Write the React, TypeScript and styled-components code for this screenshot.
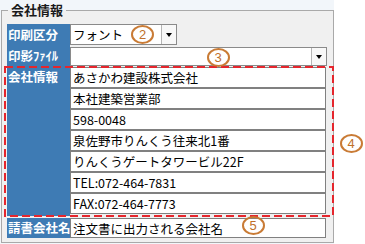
import React from "react";
import styled, { createGlobalStyle } from "styled-components";

const Global = createGlobalStyle`
  html, body { margin: 0; padding: 0; background: #ffffff; }
  body { font-family: "Noto Sans CJK JP", "Noto Sans", sans-serif; }
`;

const Page = styled.div`
  position: relative;
  width: 365px;
  height: 244px;
  overflow: hidden;
`;

const Panel = styled.div`
  width: 334px;
  height: 244px;
  box-sizing: border-box;
  padding: 2px 0 0 1px;
  background: #f2f6fa;
`;

const Fieldset = styled.fieldset`
  margin: 0;
  width: 333px;
  box-sizing: border-box;
  border: 1px solid #a9a9a9;
  background: #f0f0f0;
  padding: 6px 6px 4px 5px;
  min-width: 0;
`;

const Legend = styled.legend`
  padding: 0 3px;
  margin-left: 1px;
  font-size: 13px;
  line-height: 16px;
  font-weight: 700;
  color: #1a1a1a;
`;

const Form = styled.div`
  display: grid;
  grid-template-columns: 63px 1fr;
  grid-template-rows: 22px 20px 150px 22px;
`;

const Label = styled.div<{ $row: number; $top?: boolean; $gap?: boolean }>`
  grid-column: 1;
  grid-row: ${(p) => p.$row};
  background: #3e7bb4;
  color: #ffffff;
  font-weight: 700;
  font-size: 12.5px;
  line-height: 16px;
  padding: ${(p) => (p.$top ? "3px" : "0")} 0 0 1px;
  display: flex;
  align-items: ${(p) => (p.$top ? "flex-start" : "center")};
  white-space: nowrap;
  margin-top: ${(p) => (p.$gap ? "2px" : "0")};
`;

const Cell = styled.div<{ $row: number; $gap?: boolean }>`
  grid-column: 2;
  grid-row: ${(p) => p.$row};
  display: flex;
  flex-direction: column;
  margin-top: ${(p) => (p.$gap ? "2px" : "0")};
`;

const SelectBox = styled.div<{ $w?: number; $h: number; $mt?: number }>`
  display: flex;
  align-items: stretch;
  width: ${(p) => (p.$w ? `${p.$w}px` : "100%")};
  height: ${(p) => p.$h}px;
  margin-top: ${(p) => p.$mt ?? 0}px;
  box-sizing: border-box;
  border: 1px solid #8a8a8a;
  background: #ffffff;
`;

const SelectText = styled.span`
  flex: 1;
  padding-left: 2px;
  font-size: 12.5px;
  line-height: 18px;
  color: #000;
  display: flex;
  align-items: center;
`;

const ArrowBtn = styled.span`
  width: 15px;
  box-sizing: border-box;
  border-left: 1px solid #b5b5b5;
  background: #f8f8f8;
  display: flex;
  align-items: center;
  justify-content: center;
`;

const Tri = styled.span`
  width: 0;
  height: 0;
  border-left: 3px solid transparent;
  border-right: 3px solid transparent;
  border-top: 4px solid #000;
`;

const TextBox = styled.div<{ $h?: number }>`
  height: ${(p) => p.$h ?? 21}px;
  margin-right: 1px;
  box-sizing: border-box;
  border: 1px solid #808080;
  background: #ffffff;
  padding-left: 2px;
  font-size: 12.5px;
  color: #000;
  display: flex;
  align-items: center;
  white-space: nowrap;
  overflow: hidden;
`;

const Stack = styled.div`
  display: flex;
  flex-direction: column;
  padding-top: 1px;
`;

const DashFrame = styled.div`
  grid-column: 1 / -1;
  grid-row: 3;
  margin: 0 -7px -1px -3px;
  pointer-events: none;
  z-index: 2;
  svg { display: block; width: 100%; height: 100%; }
`;

const Badge = styled.span<{ $x: number; $y: number }>`
  position: absolute;
  left: ${(p) => p.$x - 11.5}px;
  top: ${(p) => p.$y - 9.5}px;
  width: 23px;
  height: 19px;
  box-sizing: border-box;
  border: 2px solid #c97b35;
  border-radius: 50%;
  color: #c0702a;
  font-family: "Liberation Sans", Arial, sans-serif;
  font-size: 13px;
  font-weight: 400;
  display: flex;
  align-items: center;
  justify-content: center;
  z-index: 3;
`;

const companyLines = [
  "あさかわ建設株式会社",
  "本社建築営業部",
  "598-0048",
  "泉佐野市りんくう往来北1番",
  "りんくうゲートタワービル22F",
  "TEL:072-464-7831",
  "FAX:072-464-7773",
];

export default function App() {
  return (
    <Page>
      <Global />
      <Panel>
        <Fieldset>
          <Legend>会社情報</Legend>
          <Form>
            <Label $row={1}>印刷区分</Label>
            <Cell $row={1}>
              <SelectBox $w={107} $h={21}>
                <SelectText>フォント</SelectText>
                <ArrowBtn>
                  <Tri />
                </ArrowBtn>
              </SelectBox>
            </Cell>

            <Label $row={2}>印影ﾌｧｲﾙ</Label>
            <Cell $row={2}>
              <SelectBox $h={19} $mt={1}>
                <SelectText />
                <ArrowBtn>
                  <Tri />
                </ArrowBtn>
              </SelectBox>
            </Cell>

            <Label $row={3} $top>会社情報</Label>
            <Cell $row={3}>
              <Stack>
                {companyLines.map((t) => (
                  <TextBox key={t}>{t}</TextBox>
                ))}
              </Stack>
            </Cell>
            <DashFrame>
              <svg viewBox="0 0 330 151" preserveAspectRatio="none">
                <rect
                  x="1"
                  y="1"
                  width="328"
                  height="149"
                  fill="none"
                  stroke="#e5262d"
                  strokeWidth="2"
                  strokeDasharray="8 4"
                />
              </svg>
            </DashFrame>

            <Label $row={4} $gap>請書会社名</Label>
            <Cell $row={4} $gap>
              <TextBox $h={20}>注文書に出力される会社名</TextBox>
            </Cell>
          </Form>
        </Fieldset>
      </Panel>
      <Badge $x={142.5} $y={34.5}>2</Badge>
      <Badge $x={218} $y={57}>3</Badge>
      <Badge $x={351} $y={143}>4</Badge>
      <Badge $x={253} $y={225}>5</Badge>
    </Page>
  );
}
